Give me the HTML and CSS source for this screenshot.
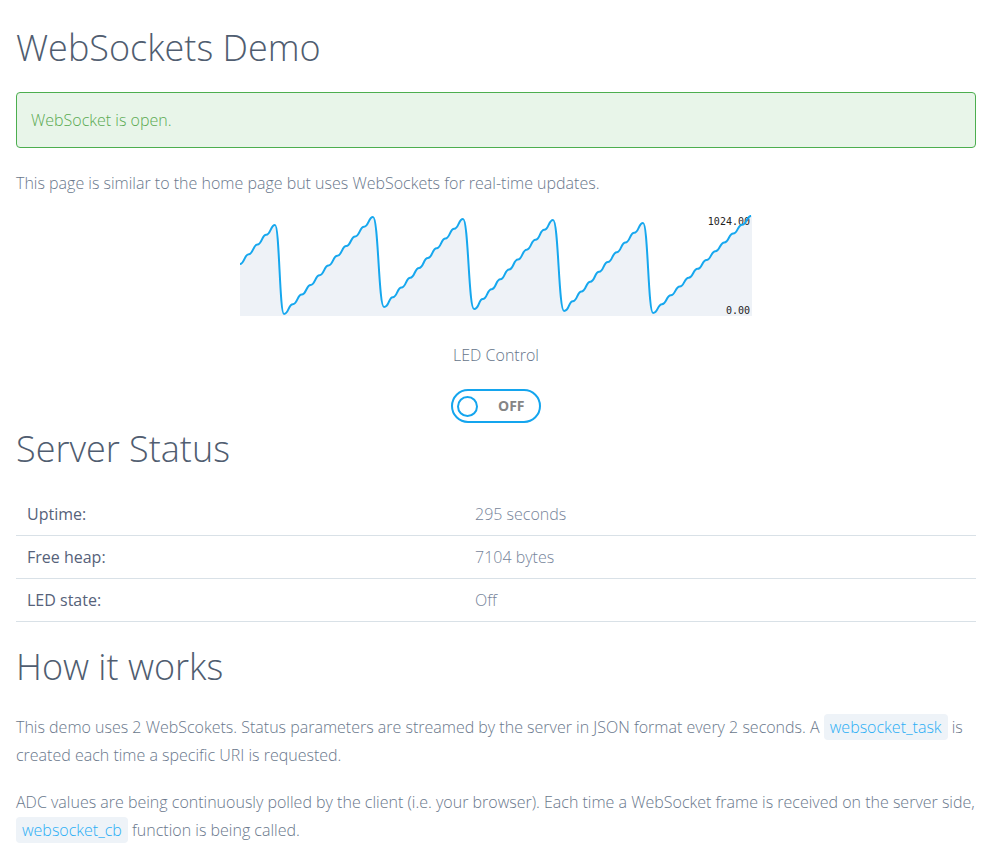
FILE: index.html
```html
<!DOCTYPE html>
<html lang="en">
<head>
<meta charset="utf-8">
<title>WebSockets Demo</title>
<link rel="stylesheet" href="styles.css">
</head>
<body>
<h1 class="title">WebSockets Demo</h1>
<div class="alert">WebSocket is open.</div>
<p class="intro">This page is similar to the home page but uses WebSockets for real-time updates.</p>
<div class="chart-wrap">
  <svg class="chart" width="512" height="101" viewBox="0 0 512 101">
    <path class="area" d="M0,49 c4.375,0 4.375,-9.75 8.75,-9.75 s4.375,-9.75 8.75,-9.75 s4.375,-9.75 8.75,-9.75 s4.375,-9.75 8.75,-9.75 c4.5,0 4.5,89 9,89 s4.45,-9.7 8.9,-9.7 s4.45,-9.7 8.9,-9.7 s4.45,-9.7 8.9,-9.7 s4.45,-9.7 8.9,-9.7 s4.45,-9.7 8.9,-9.7 s4.45,-9.7 8.9,-9.7 s4.45,-9.7 8.9,-9.7 s4.45,-9.7 8.9,-9.7 s4.45,-9.7 8.9,-9.7 s4.45,-9.7 8.9,-9.7 c5.5,0 5.5,90 11,90 s4.39,-9.78 8.78,-9.78 s4.39,-9.78 8.78,-9.78 s4.39,-9.78 8.78,-9.78 s4.39,-9.78 8.78,-9.78 s4.39,-9.78 8.78,-9.78 s4.39,-9.78 8.78,-9.78 s4.39,-9.78 8.78,-9.78 s4.39,-9.78 8.78,-9.78 s4.39,-9.78 8.78,-9.78 c5.5,0 5.5,90 11,90 s4.39,-9.89 8.78,-9.89 s4.39,-9.89 8.78,-9.89 s4.39,-9.89 8.78,-9.89 s4.39,-9.89 8.78,-9.89 s4.39,-9.89 8.78,-9.89 s4.39,-9.89 8.78,-9.89 s4.39,-9.89 8.78,-9.89 s4.39,-9.89 8.78,-9.89 s4.39,-9.89 8.78,-9.89 c5.5,0 5.5,91 11,91 s4.39,-9.78 8.78,-9.78 s4.39,-9.78 8.78,-9.78 s4.39,-9.78 8.78,-9.78 s4.39,-9.78 8.78,-9.78 s4.39,-9.78 8.78,-9.78 s4.39,-9.78 8.78,-9.78 s4.39,-9.78 8.78,-9.78 s4.39,-9.78 8.78,-9.78 s4.39,-9.78 8.78,-9.78 c5,0 5,90 10,90 s4.455,-8.82 8.91,-8.82 s4.455,-8.82 8.91,-8.82 s4.455,-8.82 8.91,-8.82 s4.455,-8.82 8.91,-8.82 s4.455,-8.82 8.91,-8.82 s4.455,-8.82 8.91,-8.82 s4.455,-8.82 8.91,-8.82 s4.455,-8.82 8.91,-8.82 s4.455,-8.82 8.91,-8.82 s4.455,-8.82 8.91,-8.82 s4.455,-8.82 8.91,-8.82 L512,1 L512,101 L0,101 Z"/>
    <text class="label" x="510" y="10" text-anchor="end">1024.00</text>
    <text class="label" x="510" y="99" text-anchor="end">0.00</text>
    <path class="line" d="M0,49 c4.375,0 4.375,-9.75 8.75,-9.75 s4.375,-9.75 8.75,-9.75 s4.375,-9.75 8.75,-9.75 s4.375,-9.75 8.75,-9.75 c4.5,0 4.5,89 9,89 s4.45,-9.7 8.9,-9.7 s4.45,-9.7 8.9,-9.7 s4.45,-9.7 8.9,-9.7 s4.45,-9.7 8.9,-9.7 s4.45,-9.7 8.9,-9.7 s4.45,-9.7 8.9,-9.7 s4.45,-9.7 8.9,-9.7 s4.45,-9.7 8.9,-9.7 s4.45,-9.7 8.9,-9.7 s4.45,-9.7 8.9,-9.7 c5.5,0 5.5,90 11,90 s4.39,-9.78 8.78,-9.78 s4.39,-9.78 8.78,-9.78 s4.39,-9.78 8.78,-9.78 s4.39,-9.78 8.78,-9.78 s4.39,-9.78 8.78,-9.78 s4.39,-9.78 8.78,-9.78 s4.39,-9.78 8.78,-9.78 s4.39,-9.78 8.78,-9.78 s4.39,-9.78 8.78,-9.78 c5.5,0 5.5,90 11,90 s4.39,-9.89 8.78,-9.89 s4.39,-9.89 8.78,-9.89 s4.39,-9.89 8.78,-9.89 s4.39,-9.89 8.78,-9.89 s4.39,-9.89 8.78,-9.89 s4.39,-9.89 8.78,-9.89 s4.39,-9.89 8.78,-9.89 s4.39,-9.89 8.78,-9.89 s4.39,-9.89 8.78,-9.89 c5.5,0 5.5,91 11,91 s4.39,-9.78 8.78,-9.78 s4.39,-9.78 8.78,-9.78 s4.39,-9.78 8.78,-9.78 s4.39,-9.78 8.78,-9.78 s4.39,-9.78 8.78,-9.78 s4.39,-9.78 8.78,-9.78 s4.39,-9.78 8.78,-9.78 s4.39,-9.78 8.78,-9.78 s4.39,-9.78 8.78,-9.78 c5,0 5,90 10,90 s4.455,-8.82 8.91,-8.82 s4.455,-8.82 8.91,-8.82 s4.455,-8.82 8.91,-8.82 s4.455,-8.82 8.91,-8.82 s4.455,-8.82 8.91,-8.82 s4.455,-8.82 8.91,-8.82 s4.455,-8.82 8.91,-8.82 s4.455,-8.82 8.91,-8.82 s4.455,-8.82 8.91,-8.82 s4.455,-8.82 8.91,-8.82 s4.455,-8.82 8.91,-8.82"/>
  </svg>
</div>
<div class="led-label">LED Control</div>
<div class="toggle-wrap">
  <button class="toggle" type="button"><span class="knob"></span><span class="toggle-text">OFF</span></button>
</div>
<h2 class="section">Server Status</h2>
<table class="status">
  <tbody>
    <tr><td class="key">Uptime:</td><td class="val">295 seconds</td></tr>
    <tr><td class="key">Free heap:</td><td class="val">7104 bytes</td></tr>
    <tr><td class="key">LED state:</td><td class="val">Off</td></tr>
  </tbody>
</table>
<h2 class="section section-how">How it works</h2>
<p class="text first">This demo uses 2 WebScokets. Status parameters are streamed by the server in JSON format every 2 seconds. A <code class="code">websocket_task</code> is created each time a specific URI is requested.</p>
<p class="text">ADC values are being continuously polled by the client (i.e. your browser). Each time a WebSocket frame is received on the server side, <code class="code">websocket_cb</code> function is being called.</p>
</body>
</html>
```
FILE: styles.css
```css
html, body {
  background: #ffffff;
}
body {
  margin: 0;
  padding: 0 10px 0 16px;
  font-family: "Open Sans", "Liberation Sans", sans-serif;
  font-weight: 300;
  font-size: 16px;
  line-height: 28px;
  color: #6a788c;
}
.title {
  margin: 26px 0 22px;
  font-size: 36px;
  line-height: 44px;
  font-weight: 300;
  color: #505d70;
}
.alert {
  border: 1px solid #4cae4f;
  border-radius: 4px;
  background: #e8f5e9;
  color: #5aaa52;
  padding: 13px 14px;
  font-weight: 300;
}
.intro {
  margin: 21px 0 0;
}
.chart-wrap {
  margin-top: 18px;
  display: flex;
  justify-content: center;
  height: 101px;
}
.chart {
  display: block;
}
.chart .area {
  fill: #eef2f7;
}
.chart .line {
  fill: none;
  stroke: #16a7ee;
  stroke-width: 2;
}
.chart .label {
  font-family: "DejaVu Sans Mono", monospace;
  font-size: 10px;
  fill: #222222;
}
.led-label {
  margin-top: 25px;
  text-align: center;
  font-weight: 300;
  color: #66758a;
}
.toggle-wrap {
  margin-top: 20px;
  display: flex;
  justify-content: center;
}
.toggle {
  box-sizing: border-box;
  width: 90px;
  height: 34px;
  border: 2px solid #14a5ee;
  border-radius: 17px;
  background: #ffffff;
  padding: 0 0 0 4px;
  display: flex;
  align-items: center;
  font-family: "Open Sans", "Liberation Sans", sans-serif;
  cursor: pointer;
}
.knob {
  box-sizing: border-box;
  width: 21px;
  height: 21px;
  border: 2px solid #14a5ee;
  border-radius: 50%;
}
.toggle-text {
  margin-left: 20px;
  font-size: 14px;
  font-weight: 700;
  color: #858585;
  line-height: 20px;
}
.section {
  margin: 4px 0 0;
  font-size: 36px;
  line-height: 44px;
  font-weight: 300;
  color: #505d70;
}
.status {
  margin-top: 22px;
  width: 100%;
  border-collapse: collapse;
}
.status td {
  padding: 8px 11px 7px;
  border-bottom: 1px solid #d9e1e7;
  line-height: 27px;
}
.status .key {
  width: 426px;
  font-weight: 400;
  color: #56627a;
}
.status .val {
  color: #76849a;
}
.section-how {
  margin-top: 23px;
}
.text {
  margin: 19px 0 0;
}
.text.first {
  margin-top: 24px;
}
.code {
  font-family: "Open Sans", "Liberation Sans", sans-serif;
  font-size: 16px;
  font-weight: 300;
  color: #2aaef5;
  background: #eef3f8;
  border-radius: 4px;
  padding: 2px 6px;
}
```
